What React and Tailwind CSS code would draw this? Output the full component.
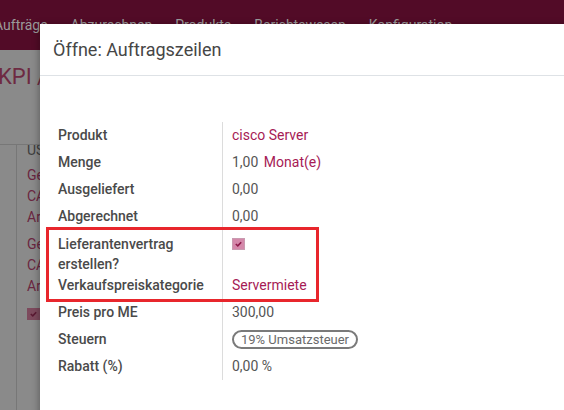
import React from 'react'

const navItems = ['Aufträge', 'Abzurechnen', 'Produkte', 'Berichtswesen', 'Konfiguration']

const rows = [
    { label: 'Produkt', value: <span className="text-[#a61b55]">cisco Server</span> },
    {
        label: 'Menge',
        value: (
            <span>
                1,00 <span className="ml-[2px] text-[#a61b55]">Monat(e)</span>
            </span>
        ),
    },
    { label: 'Ausgeliefert', value: '0,00' },
    { label: 'Abgerechnet', value: '0,00' },
]

const rowsAfter = [
    { label: 'Preis pro ME', value: '300,00' },
    {
        label: 'Steuern',
        value: (
            <span className="inline-flex items-center h-[19px] px-[7px] rounded-full border-2 border-[#7a7a7a] text-[13px] leading-none text-[#6a6a6a]">
                19% Umsatzsteuer
            </span>
        ),
    },
    { label: 'Rabatt (%)', value: '0,00 %' },
]

const Check = ({ color }) => (
    <svg width="7" height="6" viewBox="0 0 7 6">
        <path d="M0.8 3 L2.8 4.8 L6.2 1.2" fill="none" stroke={color} strokeWidth="1.6" />
    </svg>
)

const Row = ({ label, value }) => (
    <>
        <div className="h-[27px] flex items-center border-r border-[#dcdcdc] font-medium text-[#4a4a4a]">{label}</div>
        <div className="h-[27px] flex items-center pl-[9px] text-[#555]">{value}</div>
    </>
)

const App = () => {
    return (
        <div className="relative w-[564px] h-[410px] overflow-hidden bg-[#8a8a8a] font-['Roboto','Liberation_Sans',sans-serif] text-[14px]">

            {/* Background app, dimmed */}
            <div className="h-[50px] bg-[#520b27] flex gap-[23px] pt-[16px] -ml-[6px] text-[14px] leading-[18px] text-[#9a9a9a]">
                {navItems.map((item) => (
                    <span key={item}>{item}</span>
                ))}
            </div>
            <div className="h-[94px] pt-[10px] -ml-[2px] text-[22px] text-[#6e2a42]">KPI /</div>
            <div className="flex h-[266px] border-t border-[#777]">
                <div className="w-[17px] border-r border-[#777]"></div>
                <div className="pl-[10px] pt-[1px] overflow-hidden leading-[21px]">
                    <div className="-mt-[6px] text-[#3e3e3e]">US</div>
                    <div className="mt-[4px] text-[#6b2640]">
                        <div>Ge</div>
                        <div>CA</div>
                        <div>Ar</div>
                    </div>
                    <div className="mt-[6px] text-[#6b2640]">
                        <div>Ge</div>
                        <div>CA</div>
                        <div>Ar</div>
                    </div>
                    <div className="mt-[11px] w-[13px] h-[12px] bg-[#7d4a5d] flex items-center justify-center">
                        <Check color="#5a1a33" />
                    </div>
                </div>
            </div>

            {/* Dialog */}
            <div className="absolute left-[40px] top-[24px] w-[540px] h-[400px] bg-white shadow-[-2px_0_6px_rgba(0,0,0,0.25)]">
                <div className="h-[52px] flex items-center px-[13px] border-b border-[#dee2e6] text-[18px] text-[#464646]">
                    Öffne: Auftragszeilen
                </div>

                <div className="pt-[46px] px-[18px]">
                    <div className="grid grid-cols-[165px_1fr]">
                        {rows.map((r) => (
                            <Row key={r.label} {...r} />
                        ))}

                        <div className="h-[41px] pt-[4px] leading-[20px] border-r border-[#dcdcdc] font-medium text-[#4a4a4a]">
                            Lieferantenvertrag<br />erstellen?
                        </div>
                        <div className="h-[41px] pt-[8px] pl-[9px]">
                            <div className="w-[13px] h-[12px] bg-[#d488aa] border border-[#c99bb0] flex items-center justify-center">
                                <Check color="#8e1a4a" />
                            </div>
                        </div>

                        <div className="h-[28px] flex items-center border-r border-[#dcdcdc] font-medium text-[#4a4a4a]">Verkaufspreiskategorie</div>
                        <div className="h-[28px] flex items-center pl-[9px] text-[#a61b55]">Servermiete</div>

                        {rowsAfter.map((r) => (
                            <Row key={r.label} {...r} />
                        ))}
                    </div>
                </div>

                {/* Annotation box */}
                <div className="absolute left-[6px] top-[203px] w-[273px] h-[75px] border-[3px] border-[#e8262c]"></div>
            </div>
        </div>
    )
}

export default App
